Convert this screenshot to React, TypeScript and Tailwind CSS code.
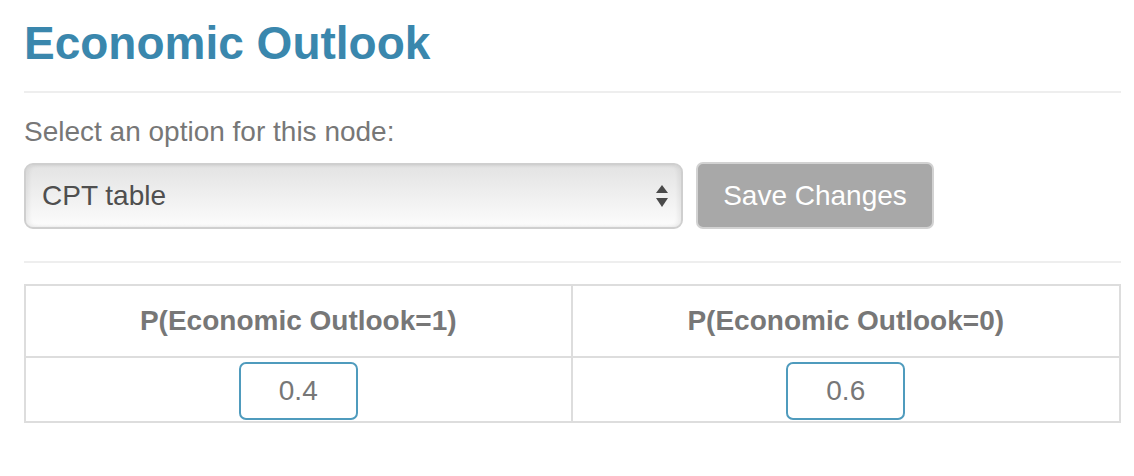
import { useState } from 'react';

const font = { fontFamily: '"Liberation Sans", Arial, Helvetica, sans-serif' };

function ProbInput({ value }: { value: string }) {
    const [v, setV] = useState(value);
    return (
        <input
            type="text"
            value={v}
            onChange={(e) => setV(e.target.value)}
            className="w-[119px] h-[58px] border-2 border-[#4f9bbd] rounded-[7px] bg-white text-center text-[28px] text-[#777] outline-none"
        />
    );
}

export default function App() {
    const [option, setOption] = useState('cpt');

    return (
        <div className="min-h-[476px] bg-white pl-6 pr-[13px] pt-5" style={font}>
            <h1 className="h-[46px] text-[46px] leading-[46px] font-bold text-[#3a87ad]">Economic Outlook</h1>

            <div className="mt-[25px] h-[2px] bg-[#eeeeee]" />

            <p className="mt-[25px] text-[28px] leading-[28px] text-[#777]">Select an option for this node:</p>

            <div className="mt-4 flex items-center gap-[13px]">
                <div className="relative w-[659px]">
                    <select
                        value={option}
                        onChange={(e) => setOption(e.target.value)}
                        className="w-full h-[66px] appearance-none rounded-[9px] border-2 border-[#cfcfcf] bg-gradient-to-b from-[#e3e3e3] to-[#fcfcfc] pl-4 pr-12 text-[28px] text-[#4f4f4f] shadow-[inset_3px_0_4px_rgba(0,0,0,0.06),inset_-3px_0_4px_rgba(0,0,0,0.06)] outline-none"
                        style={font}
                    >
                        <option value="cpt">CPT table</option>
                        <option value="noisy">Noisy-OR</option>
                    </select>
                    <svg className="pointer-events-none absolute right-[15px] top-[22px]" width="12" height="22" viewBox="0 0 12 22">
                        <path d="M6 0 L12 8 L0 8 Z" fill="#4a4a4a" />
                        <path d="M0 13 L12 13 L6 22 Z" fill="#4a4a4a" />
                    </svg>
                </div>
                <button
                    type="button"
                    className="w-[238px] h-[67px] rounded-[7px] border-2 border-[#d2d2d2] bg-[#a8a8a8] text-[28px] text-white"
                    style={font}
                >
                    Save Changes
                </button>
            </div>

            <div className="mt-[32px] h-[2px] bg-[#eeeeee]" />

            <div className="mt-[21px] border-2 border-[#dddddd]">
                <div className="grid grid-cols-2">
                    <div className="h-[70px] flex items-center justify-center border-r-2 border-[#dddddd] text-[28px] font-bold text-[#777]">
                        P(Economic Outlook=1)
                    </div>
                    <div className="h-[70px] flex items-center justify-center text-[28px] font-bold text-[#777]">
                        P(Economic Outlook=0)
                    </div>
                </div>
                <div className="grid grid-cols-2 border-t-2 border-[#dddddd]">
                    <div className="h-[63px] flex justify-center pt-1 border-r-2 border-[#dddddd]">
                        <ProbInput value="0.4" />
                    </div>
                    <div className="h-[63px] flex justify-center pt-1">
                        <ProbInput value="0.6" />
                    </div>
                </div>
            </div>
        </div>
    );
}
